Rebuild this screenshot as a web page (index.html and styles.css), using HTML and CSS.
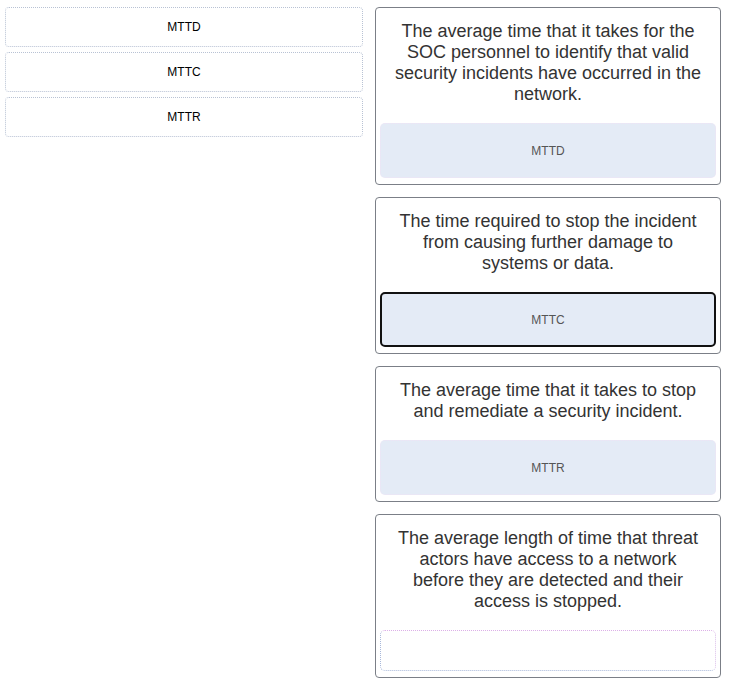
FILE: index.html
```html
<!DOCTYPE html>
<html lang="en">
<head>
<meta charset="utf-8">
<title>Matching</title>
<link rel="stylesheet" href="styles.css">
</head>
<body>
<div class="board">
  <div class="pool">
    <div class="chip">MTTD</div>
    <div class="chip">MTTC</div>
    <div class="chip">MTTR</div>
  </div>
  <div class="targets">
    <div class="card">
      <p class="prompt">The average time that it takes for the SOC personnel to identify that valid security incidents have occurred in the network.</p>
      <div class="drop filled"><span class="answer">MTTD</span></div>
    </div>
    <div class="card">
      <p class="prompt">The time required to stop the incident from causing further damage to systems or data.</p>
      <div class="drop filled selected"><span class="answer">MTTC</span></div>
    </div>
    <div class="card">
      <p class="prompt">The average time that it takes to stop and remediate a security incident.</p>
      <div class="drop filled"><span class="answer">MTTR</span></div>
    </div>
    <div class="card">
      <p class="prompt">The average length of time that threat actors have access to a network before they are detected and their access is stopped.</p>
      <div class="drop empty"></div>
    </div>
  </div>
</div>
</body>
</html>
```
FILE: styles.css
```css
html, body {
  margin: 0;
  padding: 0;
  background: #ffffff;
}
body {
  font-family: "Liberation Sans", Arial, sans-serif;
}
.board {
  display: grid;
  grid-template-columns: 358px 346px;
  column-gap: 12px;
  padding: 7px 9px 0 5px;
  align-items: start;
}
.pool {
  display: flex;
  flex-direction: column;
  gap: 5px;
}
.chip {
  height: 40px;
  box-sizing: border-box;
  border: 1px dotted #b8c2d4;
  border-radius: 4px;
  display: flex;
  align-items: center;
  justify-content: center;
  font-size: 12px;
  color: #000;
}
.targets {
  display: flex;
  flex-direction: column;
  gap: 12px;
}
.card {
  border: 1px solid #7b7f87;
  border-radius: 4px;
  padding: 13px 4px 6px;
  box-sizing: border-box;
}
.prompt {
  margin: 0 14px 18px;
  font-size: 18px;
  line-height: 21px;
  color: #333;
  text-align: center;
}
.drop {
  box-sizing: border-box;
  border-radius: 5px;
  display: flex;
  align-items: center;
  justify-content: center;
}
.drop.filled {
  height: 55px;
  background: #e4ebf6;
  border: 1px dotted #efe3f5;
}
.drop.selected {
  border: 2px solid #111;
}
.drop.empty {
  height: 41px;
  border-top: 1px dotted #dcb0e8;
  border-right: 1px dotted #dcc0ea;
  border-left: 1px dotted #a8b8da;
  border-bottom: 1px dotted #a8b8da;
}
.answer {
  font-size: 12px;
  color: #555;
}
```
